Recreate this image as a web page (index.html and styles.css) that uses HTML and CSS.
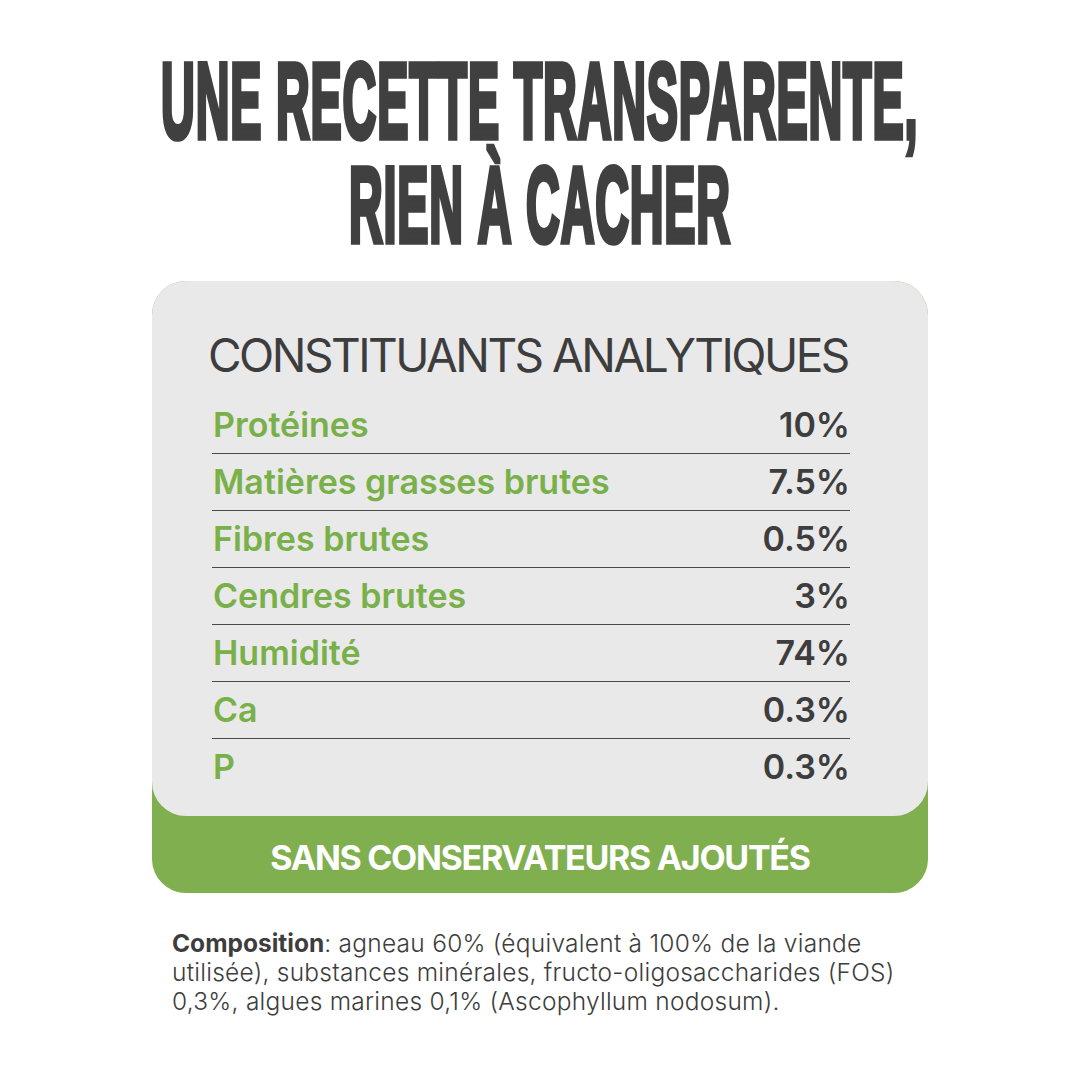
FILE: index.html
```html
<!DOCTYPE html>
<html lang="fr">
<head>
<meta charset="utf-8">
<title>Une recette transparente</title>
<link rel="stylesheet" href="styles.css">
</head>
<body>
<h1 class="title">
  <span class="title-line"><span class="title-text">UNE RECETTE TRANSPARENTE,</span></span>
  <span class="title-line"><span class="title-text">RIEN À CACHER</span></span>
</h1>
<section class="card">
  <div class="panel">
    <h2 class="panel-heading">CONSTITUANTS ANALYTIQUES</h2>
    <ul class="rows">
      <li class="row"><span class="label">Protéines</span><span class="value">10%</span></li>
      <li class="row"><span class="label">Matières grasses brutes</span><span class="value">7.5%</span></li>
      <li class="row"><span class="label">Fibres brutes</span><span class="value">0.5%</span></li>
      <li class="row"><span class="label">Cendres brutes</span><span class="value">3%</span></li>
      <li class="row"><span class="label">Humidité</span><span class="value">74%</span></li>
      <li class="row"><span class="label">Ca</span><span class="value">0.3%</span></li>
      <li class="row"><span class="label">P</span><span class="value">0.3%</span></li>
    </ul>
  </div>
  <div class="footer">SANS CONSERVATEURS AJOUTÉS</div>
</section>
<p class="composition"><strong>Composition</strong>: agneau 60% (équivalent à 100% de la viande utilisée), substances minérales, fructo-oligosaccharides (FOS) 0,3%, algues marines 0,1% (Ascophyllum nodosum).</p>
</body>
</html>
```
FILE: styles.css
```css
* { box-sizing: border-box; }
html, body { margin: 0; padding: 0; }
body {
  width: 1080px;
  height: 1080px;
  background: #ffffff;
  color: #3d3d3d;
  font-family: Inter, "Noto Sans", sans-serif;
  overflow: hidden;
}
.title {
  margin: 48px 0 0;
  text-align: center;
  font-family: "Liberation Sans Narrow", "Liberation Sans", sans-serif;
  font-weight: 700;
  font-size: 57px;
  line-height: 104px;
  color: #404040;
}
.title-line { display: block; height: 104px; white-space: nowrap; }
.title-text {
  display: inline-block;
  transform: scale(0.82, 1.9);
  transform-origin: 50% 50%;
  -webkit-text-stroke: 3px #404040;
  letter-spacing: 1px;
}
.card {
  width: 776px;
  margin: 25px auto 0;
  background: #7faf4e;
  border-radius: 34px;
}
.panel {
  background: #e9e9e9;
  border-radius: 34px;
  padding: 50px 78px 21px 60px;
}
.panel-heading {
  margin: 0 0 18px -4px;
  font-weight: 400;
  font-size: 46px;
  line-height: 48px;
  letter-spacing: -2.5px;
  white-space: nowrap;
  color: #3d3d3d;
}
.rows { list-style: none; margin: 0; padding: 0; }
.row {
  display: flex;
  justify-content: space-between;
  align-items: baseline;
  padding: 9px 0 9px 1px;
  line-height: 38px;
  font-size: 34px;
  font-weight: 600;
  border-bottom: 1.5px solid #4a4a4a;
}
.row:last-child { border-bottom: none; }
.label { color: #7ab04a; }
.value { color: #3d3d3d; }
.footer {
  height: 77px;
  display: flex;
  align-items: center;
  justify-content: center;
  padding-top: 6px;
  color: #ffffff;
  font-weight: 700;
  font-size: 34px;
  letter-spacing: -1.3px;
}
.composition {
  margin: 36px 0 0 172px;
  width: 745px;
  font-size: 24.5px;
  line-height: 29px;
  letter-spacing: 0.25px;
  font-weight: 300;
  color: #3d3d3d;
}
.composition strong { font-weight: 700; letter-spacing: 0; }
```
